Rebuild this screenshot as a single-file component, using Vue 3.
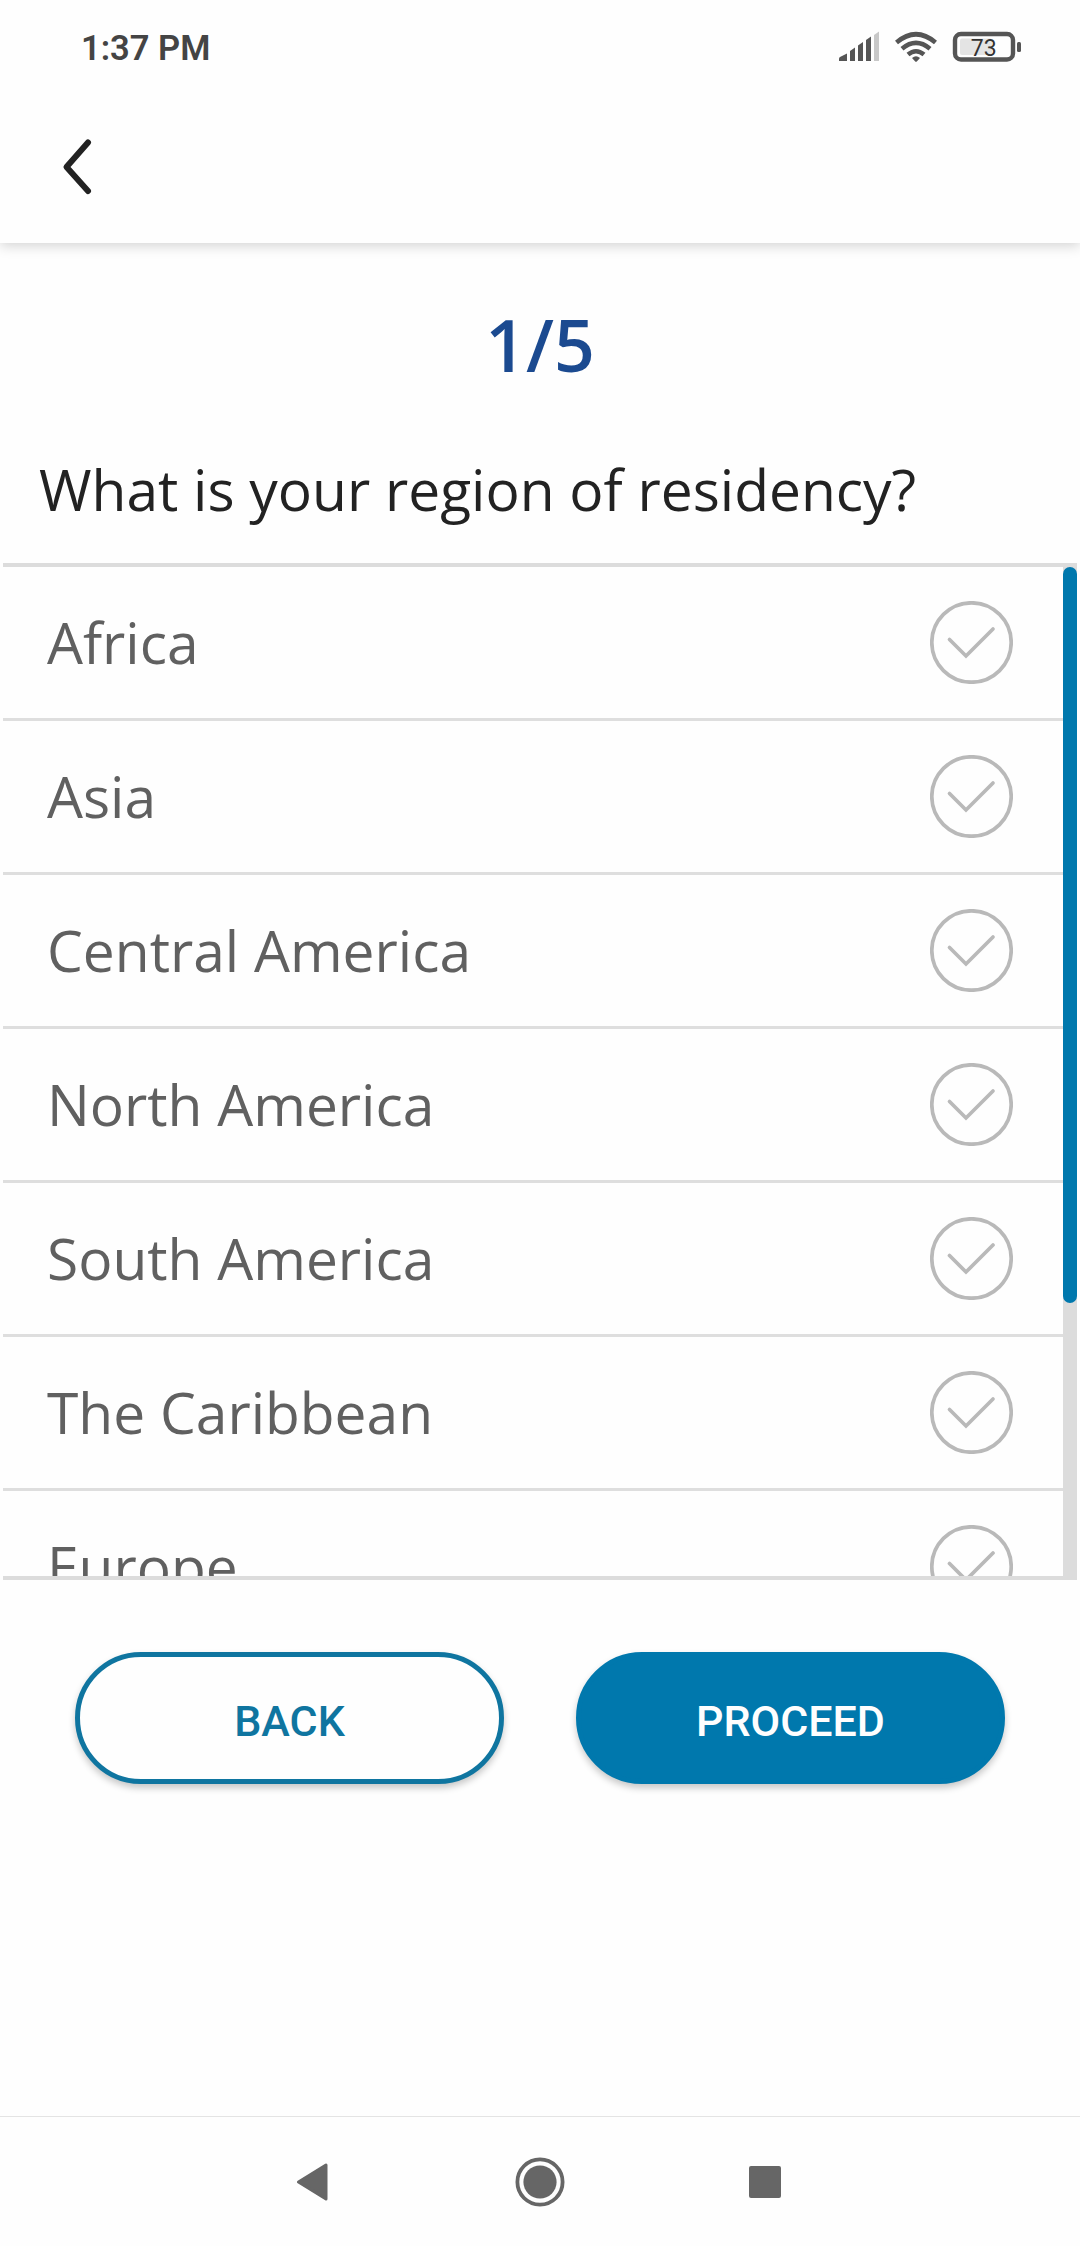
<template>
  <div class="screen">
    <div class="status-bar">
      <span class="time">1:37 PM</span>
      <svg class="status-icons" width="190" height="40" viewBox="0 0 190 40">
        <g fill="#555">
          <path d="M2 31 V28.500 Q2 27.500 3 27 L10 23.500 V31 H3.500 Q2 31 2 31z" />
          <path d="M13 31 V21 L18 17.500 V31z" />
          <path d="M21 31 V15.500 L26 12 V31z" />
          <path d="M29 31 V10 L34 6.500 V31z" />
        </g>
        <path d="M37 31 V5 L42 1.500 V31z" fill="#c8c8c8" />
        <g fill="none" stroke="#555" stroke-width="4.600">
          <path d="M59.500 12.500 Q79 -4 98.500 12.500" />
          <path d="M65 18.700 Q79 7 93 18.700" />
          <path d="M71 24.500 Q79 18 87 24.500" />
        </g>
        <path d="M75 28 Q79 24.500 83 28 L79.800 31.500 Q79 32.200 78.200 31.500z" fill="#555" />
        <rect x="118" y="4" width="58" height="25.500" rx="6" fill="none" stroke="#555" stroke-width="4.400" />
        <rect x="123" y="8.500" width="32" height="16.500" rx="2" fill="#e4e4e4" />
        <rect x="180" y="12" width="4" height="10" rx="1.500" fill="#555" />
        <text x="146.800" y="25.500" text-anchor="middle" class="battery-text">73</text>
      </svg>
    </div>

    <header class="app-bar">
      <svg class="back-icon" width="32" height="60" viewBox="0 0 32 60">
        <path d="M27 5.500 L5.500 30 L27 54" fill="none" stroke="#222" stroke-width="6" stroke-linecap="round" stroke-linejoin="round" />
      </svg>
    </header>

    <main class="content">
      <div class="step">{{ step }}/{{ totalSteps }}</div>
      <h1 class="question">What is your region of residency?</h1>

      <div class="list">
        <ul class="options">
          <li
            v-for="region in regions"
            :key="region"
            :class="['option', { selected: selected === region }]"
            @click="selected = region"
          >
            <span class="label">{{ region }}</span>
            <svg class="check" width="83" height="83" viewBox="0 0 83 83">
              <circle cx="41.500" cy="41.500" r="39.700" />
              <path d="M19.500 38.500 L36 55 L63 28" />
            </svg>
          </li>
        </ul>
        <div class="scrollbar">
          <div class="thumb"></div>
        </div>
      </div>

      <div class="actions">
        <button class="btn btn-outline">BACK</button>
        <button class="btn btn-filled">PROCEED</button>
      </div>
    </main>

    <nav class="nav-bar">
      <svg width="32" height="38" viewBox="0 0 32 38">
        <path d="M2.500 19 L30 2 V36z" fill="#666" stroke="#666" stroke-width="3" stroke-linejoin="round" />
      </svg>
      <svg width="50" height="50" viewBox="0 0 50 50">
        <circle cx="25" cy="25" r="22.600" fill="none" stroke="#666" stroke-width="3.800" />
        <circle cx="25" cy="25" r="16.600" fill="#666" />
      </svg>
      <svg width="32" height="32" viewBox="0 0 32 32">
        <rect width="32" height="32" rx="2" fill="#666" />
      </svg>
    </nav>
  </div>
</template>

<script setup>
import { ref } from 'vue';

const step = 1;
const totalSteps = 5;

const selected = ref(null);

const regions = [
  'Africa',
  'Asia',
  'Central America',
  'North America',
  'South America',
  'The Caribbean',
  'Europe'
];
</script>

<style>
body {
  margin: 0;
  background: #fefefe;
}
</style>

<style scoped>
.screen {
  display: flex;
  flex-direction: column;
  width: 1080px;
  height: 2246px;
  overflow: hidden;
  background: #fefefe;
  font-family: 'Open Sans', 'Noto Sans', sans-serif;
}

.status-bar {
  display: flex;
  justify-content: space-between;
  height: 96px;
  box-sizing: border-box;
  padding: 28px 53px 0 81px;
}

.time {
  font-family: Roboto, sans-serif;
  font-size: 34.500px;
  font-weight: 600;
  line-height: 40px;
  color: #444;
}

.status-icons {
  margin-top: 2px;
}

.battery-text {
  font-family: Roboto, sans-serif;
  font-size: 23px;
  fill: #333;
}

.app-bar {
  display: flex;
  align-items: flex-start;
  height: 147px;
  box-sizing: border-box;
  padding: 41px 0 0 61px;
  box-shadow: 0 3px 12px rgba(0, 0, 0, 0.17);
  clip-path: inset(0 0 -20px 0);
}

.content {
  flex: 1;
}

.step {
  margin-top: 53px;
  font-size: 71.500px;
  font-weight: 600;
  line-height: 97px;
  text-align: center;
  color: #1b4a90;
}

.question {
  margin: 56px 0 0;
  padding-left: 39px;
  font-size: 56.900px;
  font-weight: 400;
  line-height: 80px;
  white-space: nowrap;
  color: #222;
}

.list {
  display: flex;
  height: 1009px;
  margin: 34px 3px 0;
  border-top: 4px solid #dcdcdc;
  border-bottom: 4px solid #dcdcdc;
}

.options {
  flex: 1;
  margin: 0;
  padding: 0;
  overflow: hidden;
  list-style: none;
}

.option {
  display: flex;
  align-items: center;
  justify-content: space-between;
  height: 151px;
  padding: 0 50px 0 44px;
  border-bottom: 3px solid #dedede;
  font-size: 56.900px;
  color: #606060;
}

.label {
  padding-bottom: 2px;
}

.check {
  fill: none;
  stroke: #b9b9b9;
  stroke-width: 3.700px;
  stroke-linecap: round;
}

.selected .check {
  stroke: #0078ad;
}

.scrollbar {
  width: 14px;
  background: #dcdcdc;
}

.thumb {
  height: 736px;
  border-radius: 7px;
  background: #0078ad;
}

.actions {
  display: flex;
  justify-content: space-between;
  margin-top: 72px;
  padding: 0 75px;
}

.btn {
  width: 429px;
  height: 132px;
  border: 5px solid #0f75a0;
  border-radius: 66px;
  padding: 6px 0 0;
  font-family: Roboto, sans-serif;
  font-size: 43px;
  font-weight: 500;
  box-shadow: 0 4px 7px rgba(0, 0, 0, 0.22);
}

.btn-outline {
  background: #fefefe;
  color: #0f75a0;
}

.btn-filled {
  border-color: #0078ad;
  background: #0078ad;
  color: #fefefe;
}

.nav-bar {
  display: flex;
  align-items: center;
  justify-content: space-between;
  height: 129px;
  padding: 0 299px 0 296px;
  border-top: 1px solid #e4e4e4;
}

.nav-bar svg:nth-child(2) {
  margin-left: 3px;
}
</style>
